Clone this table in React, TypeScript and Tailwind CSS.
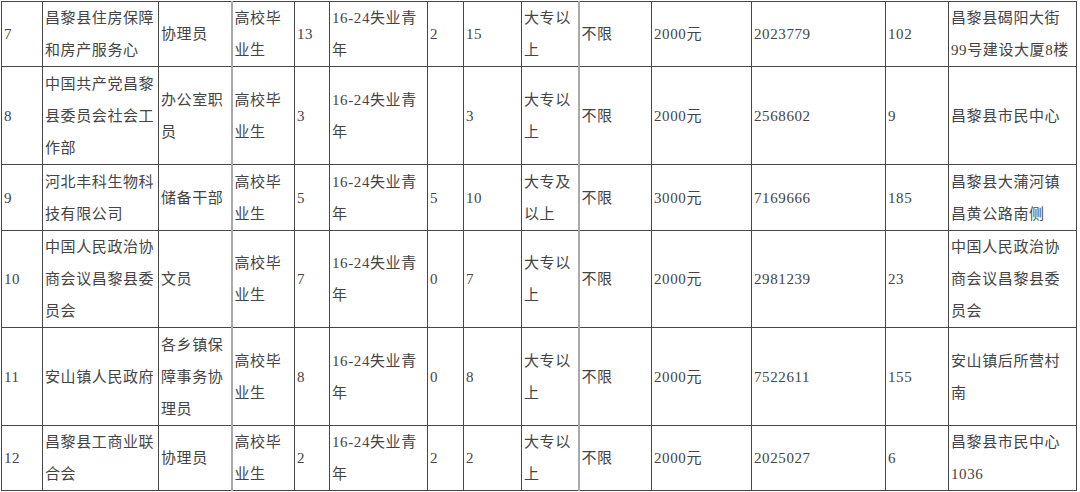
const widths = [41, 116, 73, 63, 35, 98, 36, 58, 57, 73, 100, 134, 63, 128];

type Row = { h: string; cells: string[] };

const rows: Row[] = [
	{
		h: "h-[65px]",
		cells: ["7", "昌黎县住房保障和房产服务心", "协理员", "高校毕业生", "13", "16-24失业青年", "2", "15", "大专以上", "不限", "2000元", "2023779", "102", "昌黎县碣阳大街99号建设大厦8楼"],
	},
	{
		h: "h-[98px]",
		cells: ["8", "中国共产党昌黎县委员会社会工作部", "办公室职员", "高校毕业生", "3", "16-24失业青年", "", "3", "大专以上", "不限", "2000元", "2568602", "9", "昌黎县市民中心"],
	},
	{
		h: "h-[66px]",
		cells: ["9", "河北丰科生物科技有限公司", "储备干部", "高校毕业生", "5", "16-24失业青年", "5", "10", "大专及以上", "不限", "3000元", "7169666", "185", "昌黎县大蒲河镇昌黄公路南侧"],
	},
	{
		h: "h-[97px]",
		cells: ["10", "中国人民政治协商会议昌黎县委员会", "文员", "高校毕业生", "7", "16-24失业青年", "0", "7", "大专以上", "不限", "2000元", "2981239", "23", "中国人民政治协商会议昌黎县委员会"],
	},
	{
		h: "h-[98px]",
		cells: ["11", "安山镇人民政府", "各乡镇保障事务协理员", "高校毕业生", "8", "16-24失业青年", "0", "8", "大专以上", "不限", "2000元", "7522611", "155", "安山镇后所营村南"],
	},
	{
		h: "h-[65px]",
		cells: ["12", "昌黎县工商业联合会", "协理员", "高校毕业生", "2", "16-24失业青年", "2", "2", "大专以上", "不限", "2000元", "2025027", "6", "昌黎县市民中心1036"],
	},
];

// columns whose right edge is drawn as a lighter, thicker rule
const grayRight = new Set([2, 8]);

export default function App() {
	return (
		<div className="h-[492px] w-[1080px] overflow-hidden bg-white pl-px pt-px">
			<table
				className="table-fixed border-collapse text-[15px] leading-[32px] tracking-[0.6px] text-[#444]"
				style={{ fontFamily: '"Liberation Serif", "Noto Sans CJK SC", serif', width: 1076 }}
			>
				<colgroup>
					{widths.map((w, i) => (
						<col key={i} style={{ width: w }} />
					))}
				</colgroup>
				<tbody>
					{rows.map((r) => (
						<tr key={r.cells[0]} className={r.h}>
							{r.cells.map((c, i) => (
								<td
									key={i}
									className={
										grayRight.has(i)
											? "border border-[#474747] border-r-2 border-r-[#a9a9a9] px-[2px] py-0 align-middle"
											: "border border-[#474747] px-[2px] py-0 align-middle"
									}
								>
									{c}
								</td>
							))}
						</tr>
					))}
				</tbody>
			</table>
		</div>
	);
}
